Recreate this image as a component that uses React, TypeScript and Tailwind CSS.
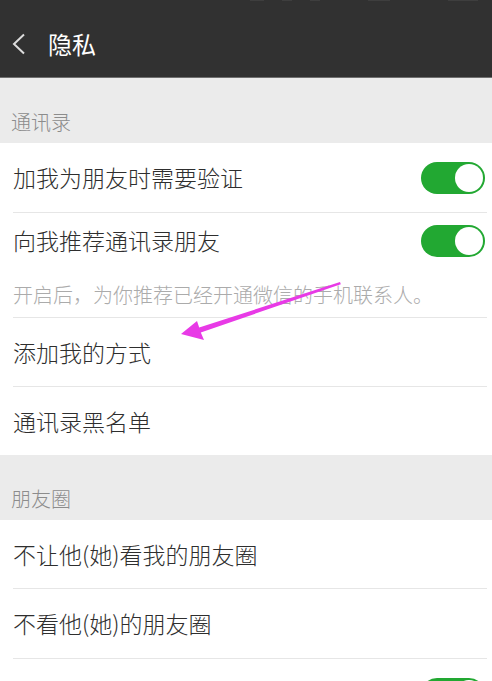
const font = { fontFamily: '"Noto Sans CJK SC", "Noto Sans", sans-serif' };

function Toggle() {
  return (
    <div className="flex h-[32px] w-[64px] items-center justify-end rounded-full bg-[#22a832] p-[2px]">
      <div className="h-[28px] w-[28px] rounded-full bg-white" />
    </div>
  );
}

function Divider() {
  return <div className="ml-[13px] mr-[5px] h-px bg-[#e6e6e6]" />;
}

function SectionLabel({ label }: { label: string }) {
  return (
    <div className="flex h-[65px] items-end bg-[#ebebeb] pb-[11px] pl-[11px]">
      <span className="text-[20px] font-light leading-[20px] text-[#8c8c8c]">{label}</span>
    </div>
  );
}

function Row({ label, toggle, height = "h-[68px]" }: { label?: string; toggle?: boolean; height?: string }) {
  return (
    <div className={`flex items-center justify-between pl-[13px] pr-[7px] ${height}`}>
      <span className="text-[23px] font-light leading-none text-[#2e2e2e]">{label}</span>
      {toggle && <Toggle />}
    </div>
  );
}

export default function App() {
  return (
    <div className="relative h-[681px] w-[492px] overflow-hidden bg-white" style={font}>
      {/* Title bar */}
      <div className="relative flex h-[78px] items-center border-b border-[#6f6f6f] bg-[#313131] pt-[10px]">
        <div className="absolute left-[250px] top-0 flex gap-[18px]">
          <div className="h-px w-[14px] bg-[#3e3e3e]" />
          <div className="h-px w-[10px] bg-[#3e3e3e]" />
          <div className="h-px w-[10px] bg-[#3e3e3e]" />
          <div className="ml-[30px] h-px w-[22px] bg-[#3e3e3e]" />
          <div className="ml-[40px] h-px w-[30px] bg-[#3e3e3e]" />
        </div>
        <svg className="ml-[11px]" width="16" height="22" viewBox="0 0 16 22">
          <path d="M13 1.5 L3 11 L13 20.5" fill="none" stroke="#dcdcdc" strokeWidth="2" />
        </svg>
        <span className="ml-[21px] text-[24px] leading-none text-white">隐私</span>
      </div>

      <SectionLabel label="通讯录" />

      <Row label="加我为朋友时需要验证" toggle height="h-[69px]" />
      <Divider />
      <div className="flex h-[55px] items-center justify-between pl-[13px] pr-[7px]">
        <span className="text-[23px] font-light leading-none text-[#2e2e2e]">向我推荐通讯录朋友</span>
        <Toggle />
      </div>
      <div className="pb-[12px] pl-[13px] pt-[17px]">
        <span className="block text-[20px] font-light leading-[20px] text-[#ababab]">
          开启后，为你推荐已经开通微信的手机联系人。
        </span>
      </div>
      <Divider />
      <Row label="添加我的方式" />
      <Divider />
      <Row label="通讯录黑名单" />

      <SectionLabel label="朋友圈" />

      <Row label="不让他(她)看我的朋友圈" />
      <Divider />
      <Row label="不看他(她)的朋友圈" height="h-[69px]" />
      <Divider />
      <Row toggle height="h-[69px]" />

      {/* annotation arrow */}
      <svg className="pointer-events-none absolute left-0 top-0" width="492" height="681">
        <polygon
          points="181,334 197,321 199.2,327.6 340,282 340.8,284.2 200.8,332.4 204,340"
          fill="#e83ae6"
        />
      </svg>
    </div>
  );
}
